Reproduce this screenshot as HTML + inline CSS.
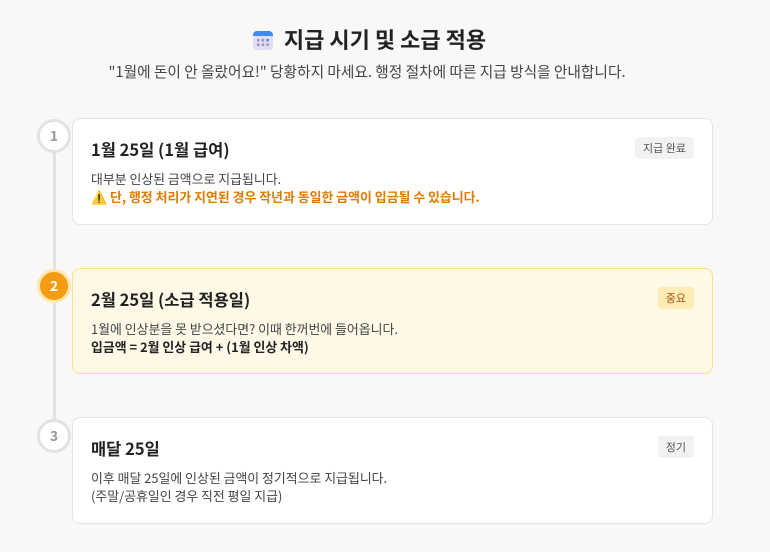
<!DOCTYPE html>
<html><head><meta charset="utf-8"><style>
body{margin:0;width:770px;height:552px;background:#f9f8f6;font-family:"Noto Sans CJK KR","Liberation Sans",sans-serif;color:#222;position:relative;overflow:hidden}
.t{position:absolute;left:0;width:738px;text-align:center;top:22px;font-size:22px;font-weight:bold;line-height:34px}
.s{position:absolute;left:0;width:734px;text-align:center;top:61px;font-size:14.7px;color:#444;line-height:22px}
.line{position:absolute;left:53px;top:140px;width:3px;height:296px;background:#e2e2e2}
.c{position:absolute;left:37px;width:28px;height:28px;border-radius:50%;border:3px solid #e2e2e2;background:#fff;color:#999;font-weight:bold;font-size:14px;text-align:center;line-height:28px}
.card{position:absolute;left:72px;width:641px;background:#fff;border:1px solid #e4e4e4;border-radius:8px;box-sizing:border-box}
.h{position:absolute;left:18px;top:18px;font-size:16.5px;font-weight:bold;line-height:24px;color:#222}
.b{position:absolute;left:18px;top:51px;font-size:12.9px;line-height:18px;color:#444}
.bd{position:absolute;right:18px;top:18px;height:22px;padding:0 8px;border-radius:4px;background:#f2f2f2;font-size:11px;line-height:22px;color:#555}
</style></head><body>
<div class="t"><svg width="22" height="22" viewBox="0 0 22 22" style="vertical-align:-3px;margin-right:10px"><rect x="1" y="2" width="20" height="19" rx="4" fill="#e2dcf7"/><path d="M1 6a4 4 0 0 1 4-4h12a4 4 0 0 1 4 4v1H1z" fill="#3d8df0"/><g fill="#9a94b8"><rect x="5" y="10" width="2.5" height="2.5"/><rect x="9.7" y="10" width="2.5" height="2.5"/><rect x="14.4" y="10" width="2.5" height="2.5" fill="#3d8df0"/><rect x="5" y="14.5" width="2.5" height="2.5"/><rect x="9.7" y="14.5" width="2.5" height="2.5"/><rect x="14.4" y="14.5" width="2.5" height="2.5"/></g></svg>지급 시기 및 소급 적용</div>
<div class="s">"1월에 돈이 안 올랐어요!" 당황하지 마세요. 행정 절차에 따른 지급 방식을 안내합니다.</div>
<div class="line"></div>
<div class="card" style="top:118px;height:107px"><div class="h">1월 25일 (1월 급여)</div><div class="b">대부분 인상된 금액으로 지급됩니다.<br><span style="color:#e07a00;font-weight:bold">⚠️ 단, 행정 처리가 지연된 경우 작년과 동일한 금액이 입금될 수 있습니다.</span></div><div class="bd">지급 완료</div></div>
<div class="card" style="top:268px;height:106px;background:#fef9e7;border-color:#fbe08a"><div class="h">2월 25일 (소급 적용일)</div><div class="b">1월에 인상분을 못 받으셨다면? 이때 한꺼번에 들어옵니다.<br><b style="color:#222">입금액 = 2월 인상 급여 + (1월 인상 차액)</b></div><div class="bd" style="background:#fdecb5;color:#a0520a">중요</div></div>
<div class="card" style="top:417px;height:107px"><div class="h">매달 25일</div><div class="b">이후 매달 25일에 인상된 금액이 정기적으로 지급됩니다.<br>(주말/공휴일인 경우 직전 평일 지급)</div><div class="bd">정기</div></div>
<div class="c" style="top:119px">1</div>
<div class="c" style="top:269px;background:#f39c12;border-color:#fde7b0;color:#fff">2</div>
<div class="c" style="top:419px">3</div>
</body></html>
